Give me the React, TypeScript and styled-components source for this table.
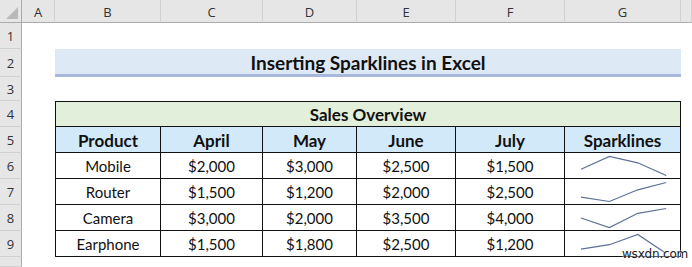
import React from 'react';
import styled, { createGlobalStyle } from 'styled-components';

interface SaleRow {
  product: string;
  values: number[];
}

const columns = ['A', 'B', 'C', 'D', 'E', 'F', 'G'];
const months = ['April', 'May', 'June', 'July'];

const sales: SaleRow[] = [
  { product: 'Mobile', values: [2000, 3000, 2500, 1500] },
  { product: 'Router', values: [1500, 1200, 2000, 2500] },
  { product: 'Camera', values: [3000, 2000, 3500, 4000] },
  { product: 'Earphone', values: [1500, 1800, 2500, 1200] },
];

const money = (v: number) => '$' + v.toLocaleString('en-US');

const GlobalStyle = createGlobalStyle`
  html, body {
    margin: 0;
    padding: 0;
    background: #ffffff;
  }
  body {
    font-family: 'Lato', 'Liberation Sans', sans-serif;
    overflow: hidden;
  }
`;

// sheet grid: header col + A..G + rest
const Sheet = styled.div`
  position: relative;
  display: grid;
  grid-template-columns: 22px 33px 106px 102px 94px 99px 109px 116px 1fr;
  grid-template-rows: 23px 26px 28px 24px repeat(6, 26px) 1fr;
  width: 692px;
  height: 267px;
  overflow: hidden;
  background: #ffffff;
`;

const Corner = styled.div`
  grid-column: 1;
  grid-row: 1;
  position: relative;
  background: #e6e6e6;
  border-right: 1px solid #ababab;
  border-bottom: 1px solid #ababab;
  box-sizing: border-box;
  &::after {
    content: '';
    position: absolute;
    right: 3px;
    bottom: 3px;
    width: 0;
    height: 0;
    border-left: 12px solid transparent;
    border-bottom: 12px solid #b9b9b9;
  }
`;

const ColHead = styled.div<{ $col: number }>`
  grid-column: ${(p) => p.$col};
  grid-row: 1;
  display: flex;
  align-items: center;
  justify-content: center;
  background: #e6e6e6;
  border-right: 1px solid #d0d0d0;
  border-bottom: 1px solid #ababab;
  box-sizing: border-box;
  font-family: 'Open Sans', 'Liberation Sans', sans-serif;
  font-size: 13px;
  color: #333333;
  padding-top: 1px;
`;

const RowHead = styled.div<{ $row: number }>`
  grid-column: 1;
  grid-row: ${(p) => p.$row};
  display: flex;
  align-items: center;
  justify-content: center;
  background: #e6e6e6;
  border-right: 1px solid #ababab;
  border-bottom: 1px solid #d0d0d0;
  box-sizing: border-box;
  font-family: 'Open Sans', 'Liberation Sans', sans-serif;
  font-size: 13px;
  color: #333333;
`;

const Title = styled.div`
  grid-column: 3 / 9;
  grid-row: 3;
  display: flex;
  align-items: center;
  justify-content: center;
  background: #dde9f5;
  border-bottom: 3px solid #a7b8dc;
  box-sizing: border-box;
  font-size: 19px;
  font-weight: 700;
  color: #111111;
  padding-top: 1px;
`;

const Table = styled.div`
  grid-column: 3 / 9;
  grid-row: 5 / 11;
  display: grid;
  grid-template-columns: 105px 102px 94px 99px 109px 116px;
  grid-template-rows: 25px repeat(5, 26px);
  border-top: 1px solid #111111;
  border-left: 1px solid #111111;
`;

const Cell = styled.div<{ $bg?: string; $bold?: boolean; $span?: number }>`
  grid-column: span ${(p) => p.$span ?? 1};
  display: flex;
  align-items: center;
  justify-content: center;
  background: ${(p) => p.$bg ?? 'transparent'};
  border-right: 1px solid #111111;
  border-bottom: 1px solid #111111;
  box-sizing: border-box;
  font-size: ${(p) => (p.$bold ? '17px' : '15px')};
  font-weight: ${(p) => (p.$bold ? 700 : 400)};
  color: #111111;
  padding-top: 1px;
`;

const SparkCell = styled.div`
  position: relative;
  border-right: 1px solid #111111;
  border-bottom: 1px solid #111111;
  box-sizing: border-box;
  svg {
    display: block;
  }
`;

const Watermark = styled.div`
  position: absolute;
  left: 622px;
  top: 247px;
  font-family: 'DejaVu Sans', sans-serif;
  font-size: 12px;
  line-height: 14px;
  letter-spacing: -0.2px;
  color: #1a1a1a;
  text-shadow: 0 0 2px #fff, 0 0 2px #fff;
`;

const Sparkline: React.FC<{ values: number[] }> = ({ values }) => {
  const max = Math.max(...values);
  const min = Math.min(...values);
  const pts = values
    .map((v, i) => {
      const x = 16 + i * 28.4;
      const y = 3.5 + ((max - v) / (max - min)) * 19;
      return `${x.toFixed(1)},${y.toFixed(1)}`;
    })
    .join(' ');
  return (
    <svg width='115' height='25' viewBox='0 0 115 25'>
      <polyline points={pts} fill='none' stroke='#5d7097' strokeWidth='1.2' />
    </svg>
  );
};

const App: React.FC = () => {
  return (
    <>
      <GlobalStyle />
      <Sheet>
        <Corner />
        {columns.map((c, i) => (
          <ColHead key={c} $col={i + 2}>
            {c}
          </ColHead>
        ))}
        <ColHead $col={9} />
        {Array.from({ length: 9 }, (_, i) => (
          <RowHead key={i} $row={i + 2}>
            {i + 1}
          </RowHead>
        ))}
        <RowHead $row={11} />

        <Title>Inserting Sparklines in Excel</Title>

        <Table>
          <Cell $span={6} $bg='#e2efda' $bold>
            Sales Overview
          </Cell>
          <Cell $bg='#d2e9fa' $bold>
            Product
          </Cell>
          {months.map((m) => (
            <Cell key={m} $bg='#d2e9fa' $bold>
              {m}
            </Cell>
          ))}
          <Cell $bg='#d2e9fa' $bold>
            Sparklines
          </Cell>
          {sales.map((row) => (
            <React.Fragment key={row.product}>
              <Cell>{row.product}</Cell>
              {row.values.map((v, i) => (
                <Cell key={i}>{money(v)}</Cell>
              ))}
              <SparkCell>
                <Sparkline values={row.values} />
              </SparkCell>
            </React.Fragment>
          ))}
        </Table>

        <Watermark>wsxdn.com</Watermark>
      </Sheet>
    </>
  );
};

export default App;
